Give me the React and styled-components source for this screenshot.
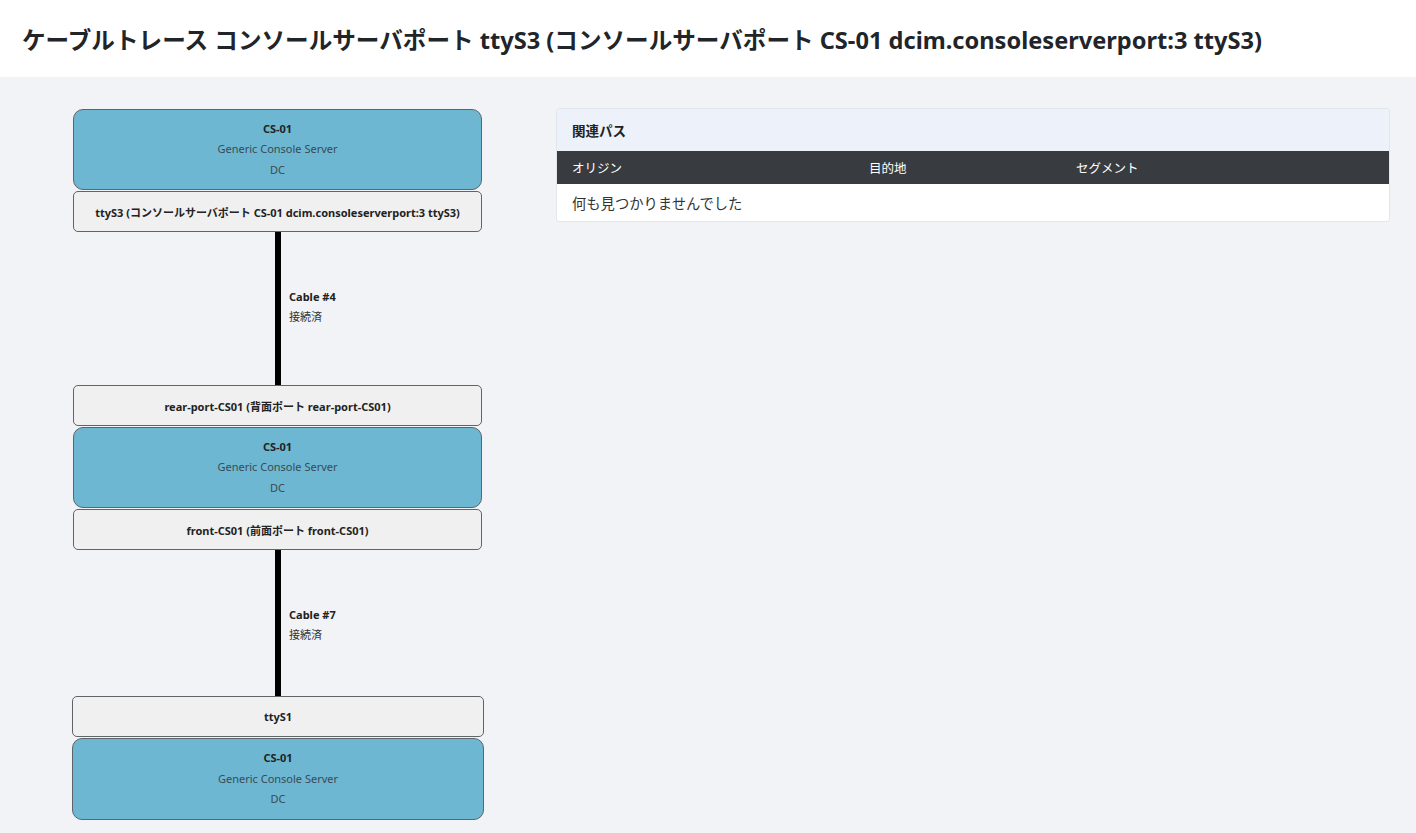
import React from "react";
import styled, { createGlobalStyle } from "styled-components";

const GlobalStyle = createGlobalStyle`
  html, body {
    margin: 0;
    padding: 0;
    background: #f1f3f7;
    font-family: "Noto Sans", "Noto Sans CJK JP", sans-serif;
    color: #212529;
  }
`;

const Header = styled.div`
  background: #ffffff;
  height: 77px;
  display: flex;
  align-items: center;
  padding-left: 22px;
`;

const Title = styled.h1`
  margin: 0;
  font-size: 23.6px;
  font-weight: 700;
  color: #212529;
`;

const Main = styled.div`
  display: flex;
  align-items: flex-start;
  padding: 31px 26px 0 72px;
  gap: 72px;
`;

const Trace = styled.div`
  width: 412px;
  display: flex;
  flex-direction: column;
  align-items: flex-start;
`;

const Device = styled.div`
  width: ${(p) => (p.wide ? "412px" : "409px")};
  margin: 1px 0 1px ${(p) => (p.wide ? 0 : 1)}px;
  box-sizing: border-box;
  height: ${(p) => p.h || 81}px;
  background: #6db7d2;
  border: 1px solid #5f6468;
  border-radius: 10px;
  display: flex;
  flex-direction: column;
  align-items: center;
  justify-content: center;
  font-size: 11px;
  line-height: 20.5px;
  color: #3b4a52;
`;

const DeviceName = styled.div`
  font-weight: 700;
  color: #222;
`;

const Port = styled.div`
  width: ${(p) => (p.wide ? "412px" : "409px")};
  margin-left: ${(p) => (p.wide ? 0 : 1)}px;
  box-sizing: border-box;
  height: 41px;
  background: #f0f0f0;
  border: 1px solid #5f6468;
  border-radius: 5px;
  display: flex;
  align-items: center;
  justify-content: center;
  font-size: 11px;
  font-weight: 700;
  color: #222;
`;

const Cable = styled.div`
  height: ${(p) => p.h}px;
  width: 100%;
  display: flex;
  justify-content: center;
`;

const Wire = styled.div`
  width: 6px;
  background: #000;
  position: relative;
`;

const CableLabel = styled.div`
  position: absolute;
  left: 14px;
  top: ${(p) => p.top}px;
  white-space: nowrap;
  font-size: 11px;
  line-height: 20px;
  color: #333;
`;

const CableName = styled.div`
  font-weight: 700;
  color: #222;
`;

const Card = styled.div`
  flex: 1;
  background: #fff;
  border: 1px solid #e3e6ea;
  border-radius: 3px;
  overflow: hidden;
`;

const CardHeader = styled.div`
  background: #edf1f9;
  height: 42px;
  display: flex;
  align-items: center;
  padding-left: 15px;
  font-size: 13.5px;
  font-weight: 700;
  color: #222;
`;

const Table = styled.table`
  width: 100%;
  border-collapse: collapse;
`;

const Th = styled.th`
  background: #383c41;
  color: #fff;
  font-weight: 400;
  font-size: 12.5px;
  text-align: left;
  height: 33px;
  padding: 0 15px;
  width: ${(p) => p.w};
`;

const Td = styled.td`
  font-size: 14.3px;
  color: #333;
  height: 37px;
  padding: 0 15px;
`;

const DeviceNode = ({ wide, h }) => (
  <Device wide={wide} h={h}>
    <DeviceName>CS-01</DeviceName>
    <div>Generic Console Server</div>
    <div>DC</div>
  </Device>
);

const CableSeg = ({ h, name, labelTop }) => (
  <Cable h={h}>
    <Wire>
      <CableLabel top={labelTop}>
        <CableName>{name}</CableName>
        <div>接続済</div>
      </CableLabel>
    </Wire>
  </Cable>
);

export default function App() {
  return (
    <>
      <GlobalStyle />
      <Header>
        <Title>
          ケーブルトレース コンソールサーバポート ttyS3 (コンソールサーバポート CS-01 dcim.consoleserverport:3 ttyS3)
        </Title>
      </Header>
      <Main>
        <Trace>
          <DeviceNode />
          <Port>ttyS3 (コンソールサーバポート CS-01 dcim.consoleserverport:3 ttyS3)</Port>
          <CableSeg h={153} name="Cable #4" labelTop={55} />
          <Port>rear-port-CS01 (背面ポート rear-port-CS01)</Port>
          <DeviceNode />
          <Port>front-CS01 (前面ポート front-CS01)</Port>
          <CableSeg h={146} name="Cable #7" labelTop={55} />
          <Port wide>ttyS1</Port>
          <DeviceNode wide h={82} />
        </Trace>
        <Card>
          <CardHeader>関連パス</CardHeader>
          <Table>
            <thead>
              <tr>
                <Th w="267px">オリジン</Th>
                <Th w="177px">目的地</Th>
                <Th>セグメント</Th>
              </tr>
            </thead>
            <tbody>
              <tr>
                <Td colSpan={3}>何も見つかりませんでした</Td>
              </tr>
            </tbody>
          </Table>
        </Card>
      </Main>
    </>
  );
}
